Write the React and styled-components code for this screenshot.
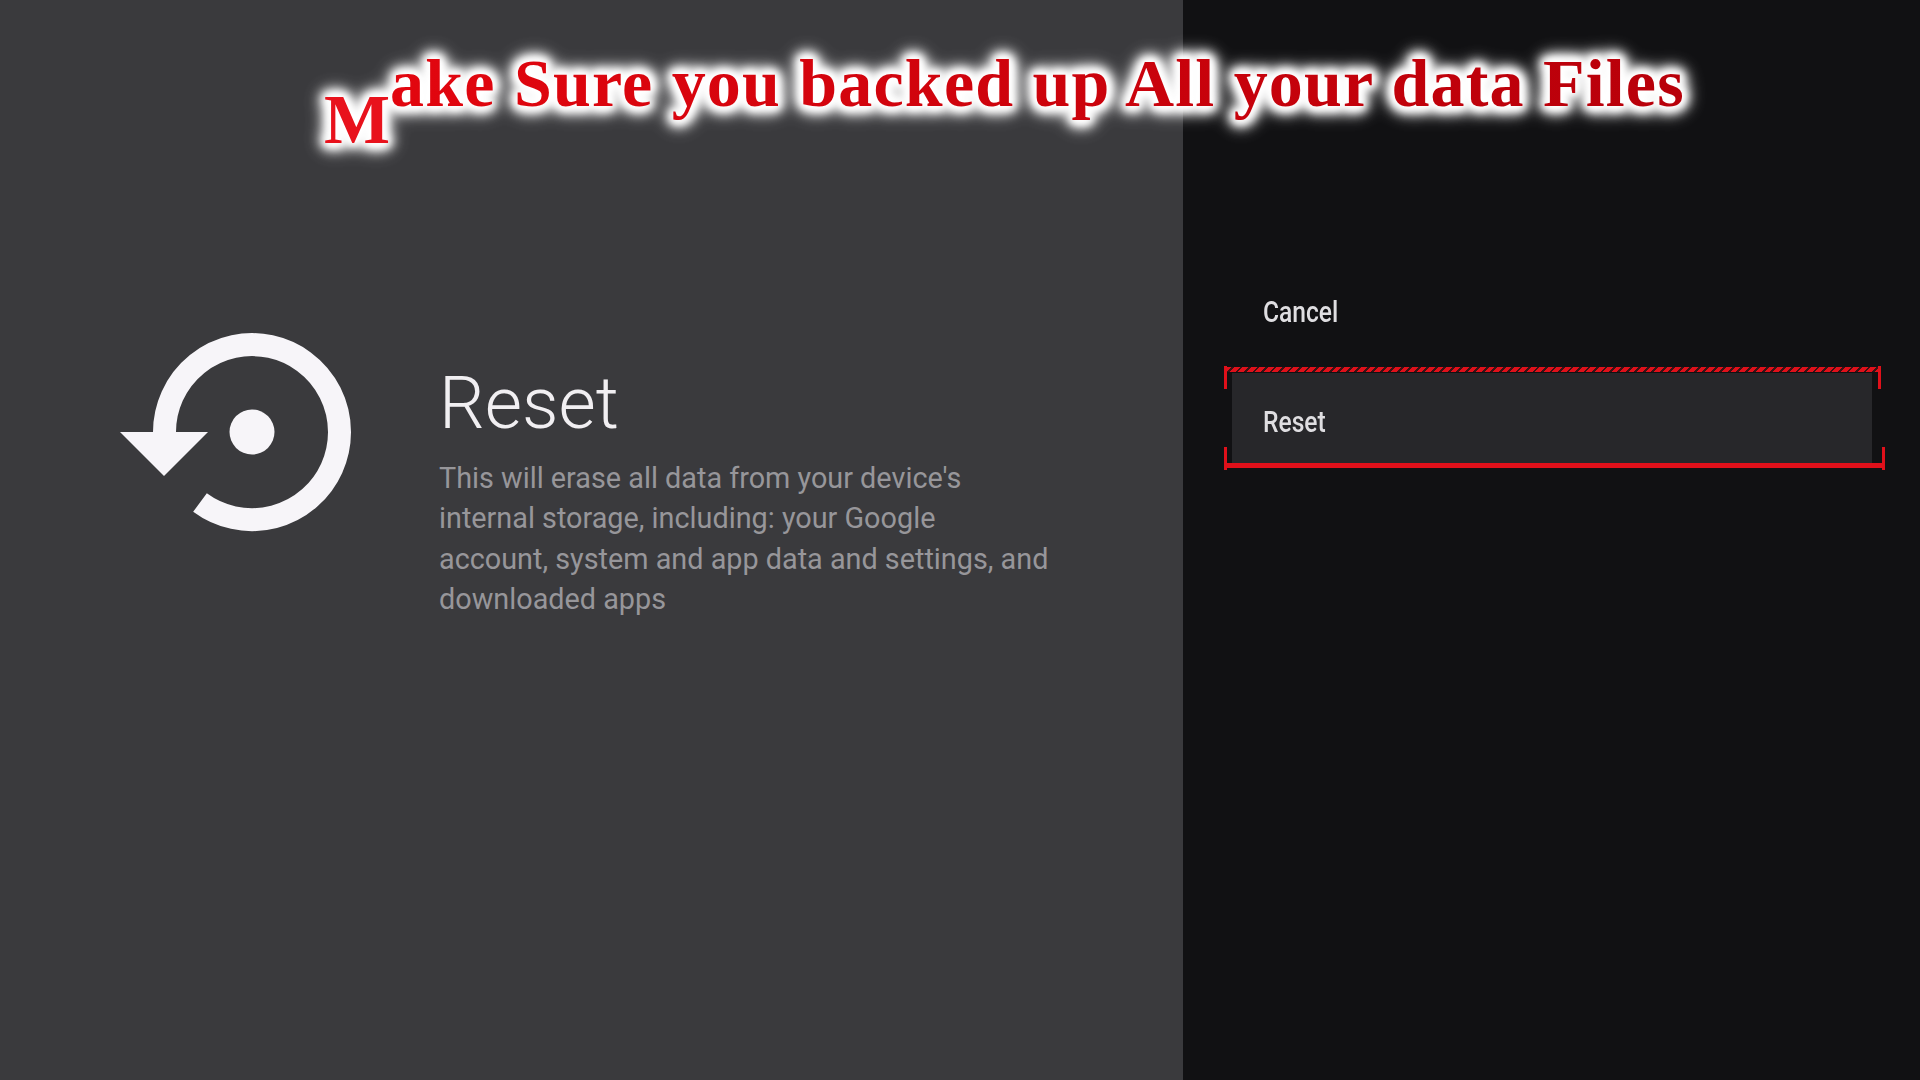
import React from 'react';
import styled, { createGlobalStyle } from 'styled-components';

const GlobalStyle = createGlobalStyle`
  html, body {
    margin: 0;
    padding: 0;
    background: #111113;
  }
`;

const Screen = styled.div`
  position: relative;
  display: flex;
  width: 1920px;
  height: 1080px;
  overflow: hidden;
  font-family: Roboto, "Liberation Sans", sans-serif;
`;

const InfoPanel = styled.section`
  display: flex;
  align-items: flex-start;
  box-sizing: border-box;
  width: 1183px;
  padding: 331px 0 0 120px;
  background: #3a3a3d;
`;

const ResetIcon = styled.svg`
  flex: none;
  width: 234px;
  height: 202px;
  margin-right: 85px;
`;

const Info = styled.div`
  margin-top: 33px;
`;

const Title = styled.h1`
  margin: 0;
  font-size: 72px;
  font-weight: 300;
  line-height: 80px;
  color: #f1eff2;
`;

const Description = styled.p`
  margin: 14px 0 0;
  font-size: 28.8px;
  line-height: 40.4px;
  white-space: nowrap;
  color: #97969a;
`;

const ActionPanel = styled.section`
  display: flex;
  flex-direction: column;
  flex: 1;
  gap: 17px;
  box-sizing: border-box;
  padding: 266px 48px 0 49px;
  background: #111113;
`;

const Action = styled.div`
  position: relative;
  display: flex;
  align-items: center;
  box-sizing: border-box;
  height: 90px;
  padding-left: 31px;
  padding-top: ${p => (p.$focused ? '7px' : '0')};
  background: ${p => (p.$focused ? '#27272a' : 'transparent')};
`;

const ActionLabel = styled.span`
  font-size: 30px;
  font-weight: 500;
  color: #dfdee1;
  transform: scaleX(0.82);
  transform-origin: left center;
`;

const HatchedEdge = styled.i`
  position: absolute;
  top: -6px;
  left: -6px;
  right: -8px;
  height: 5px;
  background: repeating-linear-gradient(135deg, #e0101a 0 4px, #3a1214 4px 6px);
`;

const SolidEdge = styled.i`
  position: absolute;
  bottom: -5px;
  left: -8px;
  right: -12px;
  height: 5px;
  background: #e0101a;
`;

const Tick = styled.i`
  position: absolute;
  width: 3px;
  height: 23px;
  background: #e0101a;
  ${p => (p.$top ? 'top: -7px;' : 'bottom: -7px;')}
  ${p => (p.$left ? 'left: -8px;' : `right: ${p.$top ? '-9px' : '-13px'};`)}
`;

const Banner = styled.div`
  position: absolute;
  top: 43px;
  left: 324px;
  display: flex;
  align-items: flex-start;
  font-family: "Liberation Serif", "Times New Roman", serif;
  font-weight: 700;
  white-space: nowrap;
  filter: drop-shadow(0 0 3px #fff) drop-shadow(0 0 4px #fff) drop-shadow(0 0 5px #fff) drop-shadow(0 0 5px #fff) drop-shadow(0 0 7px rgba(255, 255, 255, 0.7));
`;

const BannerInitial = styled.span`
  margin-top: 37px;
  font-size: 70px;
  line-height: 80px;
  color: #e8121c;
`;

const BannerText = styled.span`
  font-size: 68px;
  line-height: 80px;
  letter-spacing: 1.2px;
  background: linear-gradient(90deg, #e2060f, #b8000a);
  -webkit-background-clip: text;
  background-clip: text;
  color: transparent;
`;

export default function App() {
  return (
    <Screen>
      <GlobalStyle />
      <InfoPanel>
        <ResetIcon viewBox="120 331 234 202">
          <path
            d="M164.5 432 A87.5 87.5 0 1 1 200 502.5"
            fill="none"
            stroke="#f7f5f9"
            strokeWidth="23"
          />
          <circle cx="252" cy="432" r="22.5" fill="#f7f5f9" />
          <polygon points="120,432 208,432 164,476" fill="#f7f5f9" />
        </ResetIcon>
        <Info>
          <Title>Reset</Title>
          <Description>
            This will erase all data from your device's<br />
            internal storage, including: your Google<br />
            account, system and app data and settings, and<br />
            downloaded apps
          </Description>
        </Info>
      </InfoPanel>
      <ActionPanel>
        <Action>
          <ActionLabel>Cancel</ActionLabel>
        </Action>
        <Action $focused>
          <ActionLabel>Reset</ActionLabel>
          <HatchedEdge />
          <SolidEdge />
          <Tick $top $left />
          <Tick $top />
          <Tick $left />
          <Tick />
        </Action>
      </ActionPanel>
      <Banner>
        <BannerInitial>M</BannerInitial>
        <BannerText>ake Sure you backed up All your data Files</BannerText>
      </Banner>
    </Screen>
  );
}
